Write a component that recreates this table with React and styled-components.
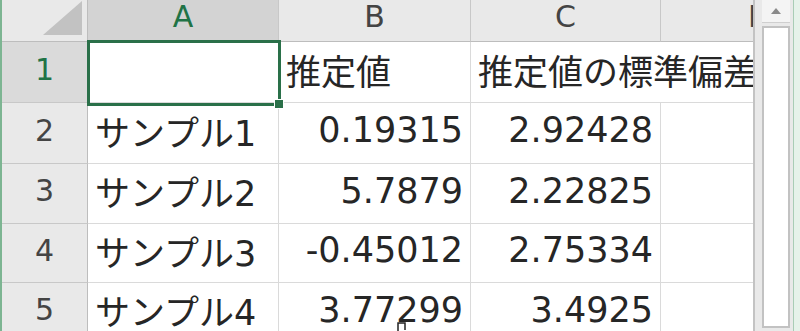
import React from 'react'
import styled, {createGlobalStyle} from 'styled-components'

const GlobalStyle = createGlobalStyle`
    html, body {
        margin: 0;
        padding: 0;
        background: #fff;
        overflow: hidden;
    }
`

const Frame = styled.div`
    display: flex;
    width: 800px;
    height: 331px;
    border-left: 2px solid #7db592;
    box-sizing: border-box;
    overflow: hidden;
    font-family: "DejaVu Sans", "Noto Sans CJK JP", sans-serif;
    color: #262626;
`

const Sheet = styled.div`
    display: grid;
    grid-template-columns: 86px 191px 192px 190px 198px;
    grid-template-rows: 42px 61px 61px 60px 59px 60px;
    width: 751px;
    height: 331px;
    flex: none;
    overflow: hidden;
`

const Corner = styled.div`
    background: #e9e9e9;
    border-right: 1px solid #bdbdbd;
    border-bottom: 1px solid #bdbdbd;
    box-sizing: border-box;
    svg { display: block; }
`

const ColHead = styled.div`
    display: flex;
    justify-content: center;
    align-items: center;
    padding-bottom: 8px;
    box-sizing: border-box;
    font-size: 30px;
    background: ${props => props.$selected ? '#d3d3d3' : '#e9e9e9'};
    color: ${props => props.$selected ? '#217346' : '#444'};
    border-right: 1px solid #c8c8c8;
    border-bottom: ${props => props.$selected ? '2px solid #217346' : '1px solid #bdbdbd'};
`

const RowHead = styled.div`
    display: flex;
    justify-content: center;
    align-items: center;
    padding-bottom: 6px;
    box-sizing: border-box;
    font-size: 30px;
    background: ${props => props.$selected ? '#dadada' : '#e9e9e9'};
    color: ${props => props.$selected ? '#217346' : '#444'};
    border-right: 1px solid #bdbdbd;
    border-bottom: 1px solid #c8c8c8;
`

const Cell = styled.div`
    position: relative;
    display: flex;
    align-items: center;
    justify-content: ${props => props.$num ? 'flex-end' : 'flex-start'};
    grid-column: ${props => props.$span ? `span ${props.$span}` : 'auto'};
    padding: 0 7px 6px 7px;
    box-sizing: border-box;
    font-size: 35px;
    white-space: nowrap;
    border-right: 1px solid #dadada;
    border-bottom: 1px solid #dadada;
`

const Selection = styled.div`
    position: absolute;
    left: -1px;
    top: -2px;
    width: 194px;
    height: 66px;
    border: 3px solid #2a7049;
    box-sizing: border-box;
    z-index: 2;
`

const FillHandle = styled.div`
    position: absolute;
    right: -6px;
    bottom: -6px;
    width: 8px;
    height: 8px;
    background: #2a7049;
    border: 1px solid #fff;
`

const Cursor = styled.svg`
    position: absolute;
    left: 117px;
    top: 38px;
`

const ScrollBar = styled.div`
    display: flex;
    flex: none;
    width: 47px;
    height: 331px;
    border-left: 2px solid #c3c3c3;
    box-sizing: border-box;
`

const Track = styled.div`
    display: flex;
    flex-direction: column;
    gap: 3px;
    width: 38px;
    padding: 0 3px 0 7px;
    box-sizing: border-box;
    background: #e9e9e9;
`

const UpButton = styled.div`
    display: flex;
    justify-content: center;
    align-items: center;
    height: 23px;
    background: #f4f4f4;
    border-bottom: 1px solid #cfcfcf;
    box-sizing: border-box;
`

const Thumb = styled.div`
    height: 302px;
    background: #fff;
    border: 2px solid #c2c2c2;
    box-sizing: border-box;
`

const Edge = styled.div`
    width: 7px;
    background: #e6f2ea;
    border-left: 1px solid #a9cdb6;
    box-sizing: border-box;
`

const cols = ['A', 'B', 'C', 'D']

const rows = [
    ['サンプル1', '0.19315', '2.92428'],
    ['サンプル2', '5.7879', '2.22825'],
    ['サンプル3', '-0.45012', '2.75334'],
    ['サンプル4', '3.77299', '3.4925'],
]

export default function App() {
    return (
        <>
            <GlobalStyle />
            <Frame>
                <Sheet>
                    <Corner>
                        <svg width="85" height="41">
                            <polygon points="41,35 80,35 80,1" fill="#c2c2c2" />
                        </svg>
                    </Corner>
                    {cols.map(c => <ColHead key={c} $selected={c === 'A'}>{c}</ColHead>)}

                    <RowHead $selected>1</RowHead>
                    <Cell>
                        <Selection><FillHandle /></Selection>
                    </Cell>
                    <Cell>推定値</Cell>
                    <Cell $span={2}>推定値の標準偏差</Cell>

                    {rows.map((r, i) => (
                        <React.Fragment key={i}>
                            <RowHead>{i + 2}</RowHead>
                            <Cell>{r[0]}</Cell>
                            <Cell $num>
                                {r[1]}
                                {i === 3 && (
                                    <Cursor width="12" height="14" viewBox="0 0 12 14">
                                        <path d="M2 13 V2 H9 V9" fill="none" stroke="#222" strokeWidth="1.5" />
                                    </Cursor>
                                )}
                            </Cell>
                            <Cell $num>{r[2]}</Cell>
                            <Cell />
                        </React.Fragment>
                    ))}
                </Sheet>
                <ScrollBar>
                    <Track>
                        <UpButton>
                            <svg width="12" height="8" viewBox="0 0 12 8">
                                <polygon points="6,1 11,7 1,7" fill="#8a8a8a" />
                            </svg>
                        </UpButton>
                        <Thumb />
                    </Track>
                    <Edge />
                </ScrollBar>
            </Frame>
        </>
    )
}
